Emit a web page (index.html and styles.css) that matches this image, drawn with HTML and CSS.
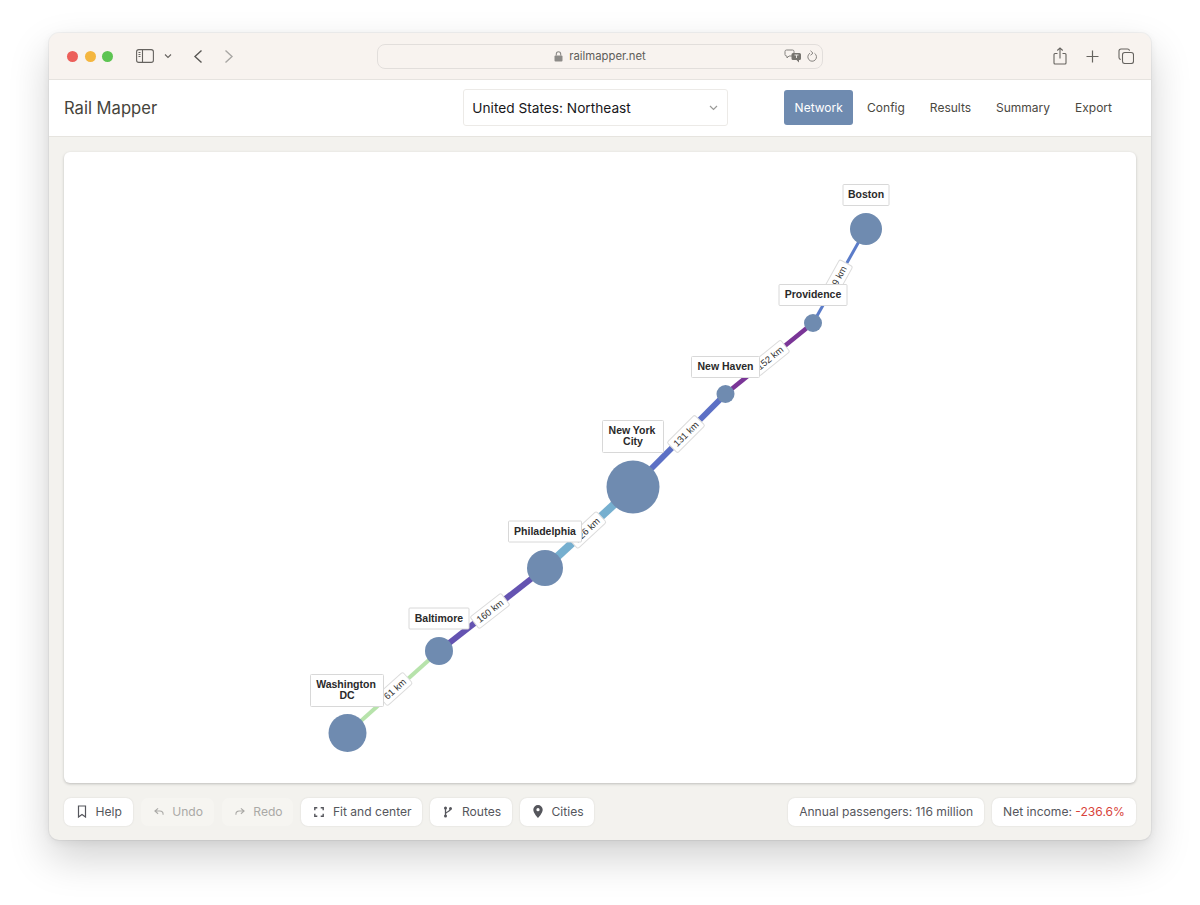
FILE: index.html
```html
<!DOCTYPE html>
<html lang="en">
<head>
<meta charset="utf-8">
<title>Rail Mapper</title>
<link rel="stylesheet" href="styles.css">
</head>
<body>
<div class="window">
  <div class="chrome">
    <div class="lights"><span class="light red"></span><span class="light amber"></span><span class="light green"></span></div>
    <svg class="ico sidebar-ico" width="18" height="14" viewBox="0 0 18 14"><rect x=".6" y=".6" width="16.8" height="12.8" rx="2.2" fill="none" stroke="#66635f" stroke-width="1.1"/><path d="M6.5 .6v12.8" stroke="#66635f" stroke-width="1.1"/><path d="M2.5 3.5h2M2.5 5.5h2M2.5 7.5h2" stroke="#66635f" stroke-width="1"/></svg>
    <svg class="ico chev-ico" width="8" height="6" viewBox="0 0 8 6"><path d="M1 1.5l3 3 3-3" fill="none" stroke="#66635f" stroke-width="1.1"/></svg>
    <svg class="ico back-ico" width="10" height="15" viewBox="0 0 10 15"><path d="M8.5 1.5L2 7.5l6.5 6" fill="none" stroke="#5a5855" stroke-width="1.4"/></svg>
    <svg class="ico fwd-ico" width="10" height="15" viewBox="0 0 10 15"><path d="M1.5 1.5L8 7.5l-6.5 6" fill="none" stroke="#a9a7a4" stroke-width="1.4"/></svg>
    <div class="urlbar">
      <div class="url-center">
        <svg width="9" height="11" viewBox="0 0 9 11"><rect x=".5" y="4.5" width="8" height="6" rx="1" fill="#8d8b88"/><path d="M2.3 4.5V3a2.2 2.2 0 0 1 4.4 0v1.5" fill="none" stroke="#8d8b88" stroke-width="1.1"/></svg>
        <span>railmapper.net</span>
      </div>
      <svg class="translate-ico" width="18" height="14" viewBox="0 0 18 14"><path d="M2.5 1h6a1.5 1.5 0 0 1 1.5 1.5v3A1.5 1.5 0 0 1 8.5 7H5L3 9V7h-.5A1.5 1.5 0 0 1 1 5.500v-3A1.5 1.5 0 0 1 2.5 1z" fill="#f8f3ef" stroke="#85827f"/><path d="M9 4h6.500A1.5 1.5 0 0 1 17 5.500v4a1.5 1.5 0 0 1-1.5 1.5H15v2.500L12.500 11H9a1.5 1.5 0 0 1-1.5-1.5v-4A1.5 1.5 0 0 1 9 4z" fill="#77746f"/><path d="M10.500 6h4M12.500 6v3" stroke="#e6e3e0"/></svg>
      <svg class="reload-ico" width="11" height="13" viewBox="0 0 11 13"><path d="M7.5 3.300A4.300 4.300 0 1 1 3 3.200" fill="none" stroke="#85827f" stroke-width="1"/><path d="M3.5 .8l2.500 2.400-2.500 2" fill="none" stroke="#85827f" stroke-width="1"/></svg>
    </div>
    <svg class="ico share-ico" width="14" height="18" viewBox="0 0 14 18"><path d="M4.5 6.500H2a1 1 0 0 0-1 1V16a1 1 0 0 0 1 1h10a1 1 0 0 0 1-1V7.500a1 1 0 0 0-1-1H9.500" fill="none" stroke="#66635f" stroke-width="1.1"/><path d="M7 11.500V1M4.300 3.500L7 .9l2.700 2.600" fill="none" stroke="#66635f" stroke-width="1.1"/></svg>
    <svg class="ico plus-ico" width="13" height="13" viewBox="0 0 13 13"><path d="M6.5 .5v12M.5 6.500h12" stroke="#66635f" stroke-width="1.2"/></svg>
    <svg class="ico tabs-ico" width="16" height="16" viewBox="0 0 16 16"><path d="M2.800 11.500A2 2 0 0 1 1 9.500V3a2 2 0 0 1 2-2h6.500a2 2 0 0 1 2 1.800" fill="none" stroke="#66635f" stroke-width="1.1"/><rect x="4.500" y="4.500" width="11" height="11" rx="2.300" fill="none" stroke="#66635f" stroke-width="1.1"/></svg>
  </div>

  <header class="app-header">
    <div class="brand">Rail Mapper</div>
    <div class="region">
      <span>United States: Northeast</span>
      <svg width="9" height="6" viewBox="0 0 9 6"><path d="M1 1l3.500 3.500L8 1" fill="none" stroke="#9a9a98" stroke-width="1.2"/></svg>
    </div>
    <nav class="tabs">
      <a class="tab active">Network</a>
      <a class="tab">Config</a>
      <a class="tab">Results</a>
      <a class="tab">Summary</a>
      <a class="tab">Export</a>
    </nav>
  </header>

  <main class="workspace">
    <section class="map">
      <svg class="map-svg" width="1072" height="631" viewBox="64 152 1072 631">
        <g class="edges" fill="none" stroke-linecap="butt">
          <path d="M347.500 733L439 651" stroke="#b7e3ab" stroke-width="4"/>
          <path d="M439 651L545 568" stroke="#6453b1" stroke-width="6"/>
          <path d="M545 568L633 487" stroke="#76afcf" stroke-width="8"/>
          <path d="M633 487L725.500 394" stroke="#5c70c5" stroke-width="6"/>
          <path d="M725.500 394L813 323" stroke="#7a3597" stroke-width="4.5"/>
          <path d="M813 323L866 229" stroke="#5b7cc9" stroke-width="3"/>
        </g>
        <g class="edge-labels">
          <g transform="translate(395 689) rotate(-42)"><rect x="-17" y="-7.5" width="34" height="15" rx="2"/><text y="3.300">61 km</text></g>
          <g transform="translate(490 611) rotate(-38)"><rect x="-19.5" y="-7.5" width="39" height="15" rx="2"/><text y="3.300">160 km</text></g>
          <g transform="translate(587 530) rotate(-43)"><rect x="-19.5" y="-7.5" width="39" height="15" rx="2"/><text y="3.300">126 km</text></g>
          <g transform="translate(686 434) rotate(-45)"><rect x="-19.5" y="-7.5" width="39" height="15" rx="2"/><text y="3.300">131 km</text></g>
          <g transform="translate(770 358) rotate(-39)"><rect x="-19.5" y="-7.5" width="39" height="15" rx="2"/><text y="3.300">152 km</text></g>
          <g transform="translate(838 278) rotate(-61)"><rect x="-17" y="-7.5" width="34" height="15" rx="2"/><text y="3.300">69 km</text></g>
        </g>
        <g class="nodes" fill="#6f8bb0">
          <circle cx="866" cy="229" r="16"/>
          <circle cx="813" cy="323" r="9"/>
          <circle cx="725.500" cy="394" r="9"/>
          <circle cx="633" cy="487" r="26.5"/>
          <circle cx="545" cy="568" r="18"/>
          <circle cx="439" cy="651" r="14"/>
          <circle cx="347.500" cy="733" r="19"/>
        </g>
        <g class="node-labels">
          <rect x="843" y="184.500" width="46" height="21" rx="1"/><text x="866" y="197.500">Boston</text>
          <rect x="779" y="284.500" width="68" height="21" rx="1"/><text x="813" y="298">Providence</text>
          <rect x="691.500" y="356.500" width="68" height="21" rx="1"/><text x="725.500" y="370">New Haven</text>
          <rect x="602.500" y="420.500" width="61" height="32" rx="1"/><text x="632" y="434">New York</text><text x="633" y="445">City</text>
          <rect x="508.500" y="521" width="73" height="21" rx="1"/><text x="545" y="534.500">Philadelphia</text>
          <rect x="409" y="608" width="60" height="21" rx="1"/><text x="439" y="621.500">Baltimore</text>
          <rect x="310.500" y="674.500" width="73" height="32" rx="1"/><text x="346" y="688">Washington</text><text x="347" y="699">DC</text>
        </g>
      </svg>
    </section>
    <div class="toolbar">
      <button class="btn">
        <svg width="10" height="13" viewBox="0 0 10 13"><path d="M1.500 1h7v11L5 9.500 1.500 12z" fill="none" stroke="#55565c" stroke-width="1.2"/></svg>
        Help
      </button>
      <button class="btn disabled">
        <svg width="10" height="9" viewBox="0 0 11 9"><path d="M4.500 1L1 4l3.500 3M1 4h5.500a3.500 3.500 0 0 1 3.500 3.500V8" fill="none" stroke="#aaa9a6" stroke-width="1.2"/></svg>
        Undo
      </button>
      <button class="btn disabled">
        <svg width="10" height="9" viewBox="0 0 11 9"><path d="M6.500 1L10 4 6.500 7M10 4H4.500A3.500 3.500 0 0 0 1 7.500V8" fill="none" stroke="#aaa9a6" stroke-width="1.2"/></svg>
        Redo
      </button>
      <button class="btn">
        <svg width="10" height="10" viewBox="0 0 10 10"><path d="M.8 3.300V.8h2.500M6.700 .8h2.500v2.500M9.200 6.700v2.500H6.700M3.300 9.200H.8V6.700" fill="none" stroke="#55565c" stroke-width="1.4"/></svg>
        Fit and center
      </button>
      <button class="btn">
        <svg width="10" height="12" viewBox="0 0 9 12"><circle cx="2" cy="2" r="1.5" fill="#55565c"/><circle cx="2" cy="10" r="1.5" fill="#55565c"/><circle cx="7" cy="2.500" r="1.5" fill="#55565c"/><path d="M2 2v8M7 3c0 3-5 2.500-5 5" fill="none" stroke="#55565c" stroke-width="1.3"/></svg>
        Routes
      </button>
      <button class="btn">
        <svg width="10" height="13" viewBox="0 0 10 13"><path fill-rule="evenodd" d="M5 0a4.700 4.700 0 0 1 4.700 4.700C9.700 8 5 13 5 13S.3 8 .3 4.700A4.700 4.700 0 0 1 5 0zm0 3.100a1.600 1.600 0 1 0 0 3.200 1.600 1.600 0 0 0 0-3.200z" fill="#55565c"/></svg>
        Cities
      </button>
      <div class="stat stat-first">Annual passengers: 116 million</div>
      <div class="stat">Net income: <span class="neg">-236.6%</span></div>
    </div>
  </main>
</div>
</body>
</html>
```
FILE: styles.css
```css
* { box-sizing: border-box; }
html, body { margin: 0; height: 100%; background: #fff; overflow: hidden; }
body { padding: 33px 49px 0; font-family: Inter, "Liberation Sans", sans-serif; }

.window {
  width: 1102px;
  height: 807px;
  border-radius: 10px;
  overflow: hidden;
  display: flex;
  flex-direction: column;
  background: #f3f2ee;
  box-shadow: 0 0 0 1px rgba(0,0,0,.04), 0 18px 40px rgba(0,0,0,.18), 0 2px 8px rgba(0,0,0,.06);
}

.chrome {
  height: 47px;
  flex: none;
  display: flex;
  align-items: center;
  padding-left: 18px;
  background: #f8f3ef;
  border-bottom: 1px solid #e6e3df;
}
.lights { display: flex; gap: 6.5px; }
.light { width: 11px; height: 11px; border-radius: 50%; }
.red { background: #ec5f5a; }
.amber { background: #f4b63f; }
.green { background: #5dc452; }
.ico { flex: none; display: block; }
.sidebar-ico { margin-left: 23px; }
.chev-ico { margin-left: 10px; }
.back-ico { margin-left: 21px; }
.fwd-ico { margin-left: 21px; }
.urlbar {
  margin-left: 143px;
  width: 446px;
  height: 25px;
  flex: none;
  position: relative;
  display: flex;
  align-items: center;
  border: 1px solid #e2dedb;
  border-radius: 8px;
  padding-right: 4px;
}
.url-center {
  position: absolute;
  left: 0;
  right: 0;
  top: 0;
  bottom: 0;
  display: flex;
  align-items: center;
  justify-content: center;
  gap: 6px;
  font-size: 11.3px;
  color: #5f5d5a;
}
.translate-ico { margin-left: auto; position: relative; }
.reload-ico { margin-left: 5px; position: relative; }
.share-ico { margin-left: 230px; }
.plus-ico { margin-left: 19px; }
.tabs-ico { margin-left: 19px; }

.app-header {
  height: 57px;
  flex: none;
  display: flex;
  align-items: center;
  padding: 0 26.5px 1px 15px;
  background: #fff;
  border-bottom: 1px solid #e6e4df;
}
.brand { font-size: 16.6px; color: #46443b; white-space: nowrap; }
.region {
  margin-left: auto;
  width: 265px;
  height: 37px;
  display: flex;
  align-items: center;
  justify-content: space-between;
  padding: 0 9px 0 8px;
  border: 1px solid #eceae7;
  border-radius: 3px;
  font-size: 13.7px;
  color: #17171a;
}
.tabs { margin-left: 56px; display: flex; align-items: center; }
.tab {
  height: 35px;
  display: flex;
  align-items: center;
  padding: 0 12.5px;
  font-size: 12px;
  color: #4a483f;
  border-radius: 3px;
}
.tab.active { background: #6f8bb0; color: #fff; padding: 0 10.25px; margin-right: 1.5px; }

.workspace {
  flex: 1;
  display: flex;
  flex-direction: column;
  padding: 15px 15px 14px;
  gap: 15px;
  min-height: 0;
}
.map {
  height: 631px;
  flex: none;
  background: #fff;
  border-radius: 6px;
  box-shadow: 0 1px 3px rgba(0,0,0,.22);
  overflow: hidden;
}
.map-svg { display: block; }
.edge-labels rect { fill: #fff; stroke: #dcdcdc; stroke-width: 1; }
.edge-labels text {
  font: 9.5px "Liberation Sans", Arial, sans-serif;
  fill: #333;
  text-anchor: middle;
}
.node-labels rect { fill: #fff; stroke: #d8d8d8; stroke-width: 1; }
.node-labels text {
  font: bold 10.5px "Liberation Sans", Arial, sans-serif;
  fill: #2a2a2a;
  text-anchor: middle;
}

.toolbar { display: flex; align-items: center; height: 28px; flex: none; gap: 8px; }
.btn, .stat {
  height: 28px;
  display: flex;
  align-items: center;
  background: #fff;
  border: 0;
  border-radius: 7px;
  box-shadow: 0 0 2px rgba(0,0,0,.12);
  padding-bottom: 1px;
  font-family: Inter, "Liberation Sans", sans-serif;
  font-size: 12.1px;
  color: #55565c;
  white-space: nowrap;
}
.btn { padding: 0 10.8px 1px 13px; gap: 8.5px; }
.btn.disabled { background: #f6f5f1; color: #aaa9a6; box-shadow: none; }
.stat { padding: 0 11px 1px; white-space: pre; }
.stat-first { margin-left: auto; }
.neg { color: #d8433b; }
```
